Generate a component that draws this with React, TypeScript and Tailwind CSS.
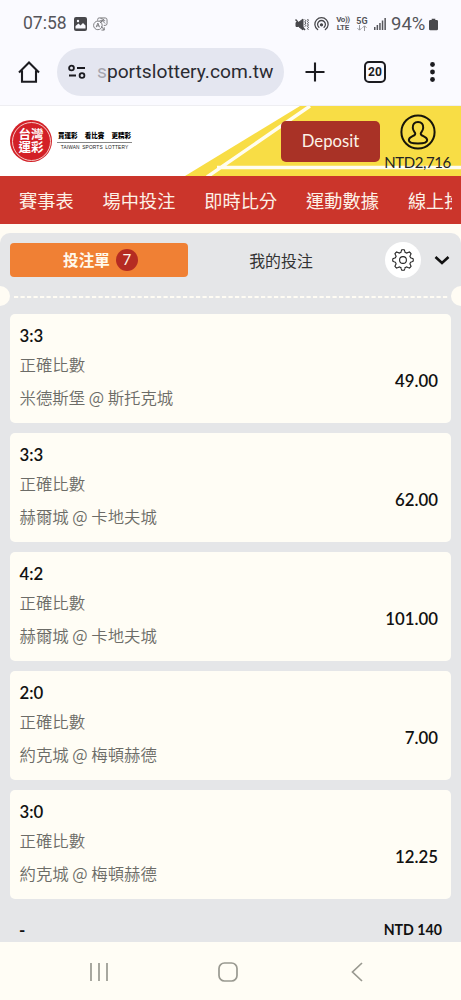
const latin = "font-[Lato,'Noto_Sans_CJK_TC',sans-serif]";

const menu = ["賽事表", "場中投注", "即時比分", "運動數據", "線上投注"];

const bets = [
  { pick: "3:3", market: "正確比數", match: "米德斯堡 @ 斯托克城", odds: "49.00" },
  { pick: "3:3", market: "正確比數", match: "赫爾城 @ 卡地夫城", odds: "62.00" },
  { pick: "4:2", market: "正確比數", match: "赫爾城 @ 卡地夫城", odds: "101.00" },
  { pick: "2:0", market: "正確比數", match: "約克城 @ 梅頓赫德", odds: "7.00" },
  { pick: "3:0", market: "正確比數", match: "約克城 @ 梅頓赫德", odds: "12.25" },
];

// Outline of the settings gear, eight rounded teeth
function gearPath() {
  const pts: string[] = [];
  const n = 160;
  for (let i = 0; i <= n; i++) {
    const a = (i / n) * Math.PI * 2;
    const wave = Math.max(-1, Math.min(1, Math.cos(a * 8) * 1.7));
    const r = 9.05 + wave * 1.2;
    pts.push(`${(12 + r * Math.sin(a)).toFixed(2)} ${(12 - r * Math.cos(a)).toFixed(2)}`);
  }
  return `M${pts.join("L")}Z`;
}

function StatusBar() {
  return (
    <div className="flex h-[47px] items-center pl-[23px] pr-[22px] pt-px text-[#55555a]">
      <span className="w-[44px] whitespace-nowrap font-[Roboto,sans-serif] text-[17.5px] leading-none">07:58</span>
      <svg className="ml-[7px] h-[14px] w-[13px]" viewBox="0 0 13 14">
        <rect width="13" height="14" rx="2" fill="#48484c" />
        <path d="M1.5 11.5V9l3-2.5 2 2 2.5-2.5 2.5 2.5v3z" fill="#fafaff" />
        <circle cx="4" cy="4" r="1.2" fill="#fafaff" />
      </svg>
      <svg className="ml-[6px] h-[14px] w-[15px]" viewBox="0 0 16 15" fill="none" stroke="#77777b">
        <path d="M5 4V2.5Q5 1 6.5 1H13q2 0 2 2v4q0 2-2 2h-1.5M8 1.5l3 1M7 4h6M9.5 4 8 6.5M10 4l3 3M12 2 8 6" />
        <circle cx="5.2" cy="9" r="4.6" />
        <path d="m3.3 11 1.9-4.5L7 11M4 9.5h2.5M9 10l3 4M12 11v3H9" />
      </svg>
      <div className="ml-auto flex items-center">
        <svg className="h-[13px] w-[14px]" viewBox="0 0 14 13" fill="none" stroke="#48484c">
          <path d="M1 4.5h2.5L8 1v11L3.5 8.5H1z" fill="#48484c" />
          <path d="M.5 1.5 10 12" strokeWidth="1.5" />
          <path d="m9.8 1.5 1 1.2-1 1.2 1 1.2-1 1.2 1 1.2-1 1.2M12.5 1l.9 1.2-.9 1.2.9 1.2-.9 1.2.9 1.2-.9 1.2.9 1.2-.9 1.2.9 1.2" />
        </svg>
        <svg className="ml-[5px] h-[14px] w-[15px]" viewBox="0 0 15 14" fill="none" stroke="#48484c" strokeWidth="1.3" strokeLinecap="round">
          <path d="M3.6 12.6a6.6 6.6 0 1 1 7.8 0M4.9 10.3a3.9 3.9 0 1 1 5.2 0" />
          <circle cx="7.5" cy="7.8" r="1" fill="#48484c" />
        </svg>
        <div className="ml-[7px] flex w-[14px] flex-col items-center whitespace-nowrap font-[Roboto,sans-serif] text-[8px] font-bold leading-[8px]">
          <span className="tracking-[-0.4px]">Vo))</span>
          <span className="tracking-[-0.2px]">LTE</span>
        </div>
        <div className="ml-[6px] flex w-[12px] flex-col items-center whitespace-nowrap font-[Roboto,sans-serif] text-[9px] font-bold leading-[8px]">
          <span>5G</span>
          <svg className="h-[6px] w-[10px]" viewBox="0 0 10 6" fill="none" stroke="#99999d">
            <path d="M2.5 0v5M.5 3.2l2 2 2-2M7.5 6V1M5.5 2.8l2-2 2 2" />
          </svg>
        </div>
        <svg className="ml-[6px] h-[12px] w-[12px]" viewBox="0 0 12 12" fill="#55555a">
          <path d="M0 9h1.5v3H0zM2.6 7h1.5v5H2.6zM5.2 5h1.5v7H5.2zM7.8 2.5h1.5V12H7.8zM10.4 0h1.5v12h-1.5z" />
        </svg>
        <span className="ml-[5px] w-[37px] whitespace-nowrap font-[Roboto,sans-serif] text-[18.5px] leading-none">94%</span>
        <svg className="ml-px mr-px h-[13px] w-[9px]" viewBox="0 0 10 13" fill="#48484c">
          <path d="M3 0h4v1.5h1.5Q10 1.5 10 3v8.5Q10 13 8.5 13h-7Q0 13 0 11.5V3q0-1.5 1.5-1.5H3z" />
        </svg>
      </div>
    </div>
  );
}

function BrowserBar() {
  return (
    <div className="flex h-[59px] items-start border-b border-[#eeeef2] pl-[18px] pt-px">
      <svg className="mt-[12px] h-[24px] w-[22px]" viewBox="0 0 22 24" fill="none" stroke="#1b1b20" strokeWidth="2.1">
        <path d="M1 12.5 11 2.5l10 10M4 10.5v11.3h14V10.5" />
      </svg>
      <div className="ml-[17px] flex h-[48px] w-[227px] items-center rounded-full bg-[#e4e6f0] pl-[11px]">
        <svg className="h-[16px] w-[18px]" viewBox="0 0 18 16" fill="none" stroke="#1b1b20" strokeWidth="1.8">
          <circle cx="3.5" cy="4" r="2.4" />
          <path d="M9 4h8M1 11.5h7" />
          <circle cx="14" cy="11.5" r="2.4" />
        </svg>
        <span className="ml-[11px] w-[178px] whitespace-nowrap font-[Roboto,sans-serif] text-[19.2px] leading-none text-[#2b2b32]">
          <span className="text-[#a6a7b0]">s</span>portslottery.com.tw
        </span>
      </div>
      <svg className="ml-[21px] mt-[14px] h-[20px] w-[20px]" viewBox="0 0 20 20" stroke="#1b1b20" strokeWidth="2.1">
        <path d="M10 .5v19M.5 10h19" />
      </svg>
      <div className="ml-[39px] mt-[13px] flex h-[22px] w-[22px] items-center justify-center rounded-[5px] border-2 border-[#1b1b20] font-[Roboto,sans-serif] text-[12px] font-bold text-[#1b1b20]">
        20
      </div>
      <svg className="ml-[44px] mt-[14px] h-[20px] w-[5px]" viewBox="0 0 5 20" fill="#1b1b20">
        <circle cx="2.5" cy="2.5" r="2.4" />
        <circle cx="2.5" cy="10" r="2.4" />
        <circle cx="2.5" cy="17.5" r="2.4" />
      </svg>
    </div>
  );
}

function Logo() {
  return (
    <div className="flex items-center">
      <div className="h-[42px] w-[42px] rounded-full bg-[#d32027] p-[1.5px]">
        <div className="flex h-full w-full items-center justify-center rounded-full border border-[#f5c9c5] pt-px">
          <div className="w-[26px] text-center text-[12.5px] font-bold leading-[12.5px] text-white">台灣運彩</div>
        </div>
      </div>
      <div className="ml-[5px] flex w-[75px] flex-col items-center whitespace-nowrap text-black">
        <div className="flex h-[11px] w-[73px] justify-between text-[6.5px] font-black leading-[9px]">
          <span>買運彩</span>
          <span>看比賽</span>
          <span>更精彩</span>
        </div>
        <div className="h-px w-full bg-[#888]" />
        <span className="mt-[1px] font-['Liberation_Sans',sans-serif] text-[4.8px] leading-[7px] tracking-[0.15px] text-[#222] [word-spacing:1px]">
          TAIWAN SPORTS LOTTERY
        </span>
      </div>
    </div>
  );
}

function SiteHeader() {
  return (
    <header className="relative flex h-[70px] bg-white pl-[9px]">
      <svg className="absolute inset-0 h-full w-full" viewBox="0 0 461 70">
        <path d="M300 0H461V70H185z" fill="#f8dd45" />
        <path d="M310 0 207 71M461 61.5H217" stroke="#fffdf0" strokeWidth="3.4" />
      </svg>
      <div className="relative flex w-full items-start">
        <div className="pl-px pt-[14px]">
          <Logo />
        </div>
        <button className="ml-auto mt-[15px] h-[41px] w-[99px] rounded-[5px] bg-[#a93226] text-[16.7px] text-[#fdf3e8]">
          Deposit
        </button>
        <div className="ml-[3px] flex w-[69px] flex-col items-center pt-[8px]">
          <Account />
          <span className="mt-[3px] whitespace-nowrap text-[15px] leading-[18px] tracking-[-0.4px] text-[#222]">NTD2,716</span>
        </div>
        <div className="w-[9px]" />
      </div>
    </header>
  );
}

function Account() {
  return (
    <svg className="h-[36px] w-[36px]" viewBox="0 0 36 36" fill="none" stroke="#17150a" strokeWidth="2">
      <circle cx="18" cy="18" r="16.6" />
      <path d="M18 8c-3.6 0-5.500 2.500-5.200 6 .2 2.500 1.500 3.700 2.200 4.800.6 1 .1 2-1.200 2.700-2.600 1.200-5 2-5 4.500 0 2.200 4 3.500 9.200 3.500s9.200-1.300 9.200-3.500c0-2.500-2.400-3.300-5-4.500-1.300-.7-1.800-1.700-1.200-2.700.7-1.100 2-2.300 2.200-4.800.3-3.500-1.600-6-5.200-6z" />
    </svg>
  );
}

function TabRow() {
  return (
    <div className="flex h-[53px] items-center pl-[10px] pr-[11px]">
      <button className="flex h-[34px] w-[178px] items-center justify-center gap-[6px] rounded-[4px] bg-[#f08034] pl-[3px] text-[15.6px] font-bold text-[#fff9ec]">
        <span className="pt-[2px]">投注單</span>
        <span className="flex h-[22px] w-[22px] items-center justify-center rounded-full bg-[#b52b22] text-[15px] font-normal">7</span>
      </button>
      <button className="w-[186px] pt-[2px] text-center text-[15.9px] text-[#333]">我的投注</button>
      <div className="ml-[11px] flex h-[36px] w-[36px] items-center justify-center rounded-full bg-white">
        <svg className="h-[24px] w-[24px]" viewBox="0 0 24 24" fill="none" stroke="#222" strokeWidth="1.1">
          <path d={gearPath()} />
          <circle cx="12" cy="12" r="3.4" />
        </svg>
      </div>
      <svg className="ml-auto mt-[2px] h-[9px] w-[16px]" viewBox="0 0 16 9" fill="none" stroke="#111" strokeWidth="2.6">
        <path d="m1.5 1 6.5 6 6.5-6" />
      </svg>
    </div>
  );
}

function Perforation() {
  return (
    <div className="flex h-[20px] items-center justify-between overflow-hidden">
      <div className="-ml-[10px] h-[20px] w-[20px] shrink-0 rounded-full bg-[#fffcf4]" />
      <svg className="mt-[2px] h-[2px] w-[440px]" viewBox="0 0 440 2">
        <path d="M3 1h435" stroke="#fffcf4" strokeWidth="2" strokeDasharray="4.2 2.3" />
      </svg>
      <div className="-mr-[10px] h-[20px] w-[20px] shrink-0 rounded-full bg-[#fffcf4]" />
    </div>
  );
}

function BetCard({ pick, market, match, odds }: (typeof bets)[number]) {
  return (
    <div className="flex h-[109px] justify-between rounded-[5px] bg-[#fffdf5] pl-[9.5px] pr-[13px]">
      <div className="pt-[10px]">
        <div className="text-[16.8px] font-semibold leading-[24px] text-[#111]">{pick}</div>
        <div className="mt-px font-['Noto_Sans_CJK_TC',sans-serif] text-[16.4px] font-[350] leading-[30px] text-[#6c6c67]">{market}</div>
        <div className="mt-[3px] font-['Noto_Sans_CJK_TC',sans-serif] text-[16.4px] font-[350] leading-[30px] text-[#6c6c67]">{match}</div>
      </div>
      <div className="pt-[55px] text-[16.8px] font-semibold leading-[24px] text-[#111]">{odds}</div>
    </div>
  );
}

function SystemNav() {
  return (
    <nav className="flex h-[58px] items-center bg-[#fffdf5] pl-[90px] pt-px">
      <svg className="h-[20px] w-[18px]" viewBox="0 0 18 20" stroke="#999990" strokeWidth="1.7">
        <path d="M1 1v18M9 1v18M17 1v18" />
      </svg>
      <svg className="ml-[110px] h-[20px] w-[20px]" viewBox="0 0 20 20" fill="none" stroke="#999990" strokeWidth="1.7">
        <rect x="1" y="1" width="18" height="18" rx="5.5" />
      </svg>
      <svg className="ml-[113px] h-[20px] w-[12px]" viewBox="0 0 12 20" fill="none" stroke="#999990" strokeWidth="1.7">
        <path d="M11 1 1.5 10l9.5 9" />
      </svg>
    </nav>
  );
}

export default function App() {
  return (
    <div lang="zh-TW" className={`h-[1000px] w-[461px] overflow-hidden bg-[#fffcf4] ${latin}`}>
      <div className="bg-[#fafaff]">
        <StatusBar />
        <BrowserBar />
      </div>
      <SiteHeader />
      <nav className="mb-[9px] flex h-[48px] items-center overflow-hidden bg-[#cb352b] pl-[19px] pr-[9px] pt-[4px]">
        <div className="flex gap-[29px] overflow-hidden whitespace-nowrap text-[18.2px] text-[#fdf1e7]">
          {menu.map((item) => (
            <span key={item}>{item}</span>
          ))}
        </div>
      </nav>
      <main className="h-[709px] rounded-t-[10px] bg-[#e5e6e8]">
        <TabRow />
        <Perforation />
        <div className="flex flex-col gap-[10px] px-[10px] pt-[8px]">
          {bets.map((bet, i) => (
            <BetCard key={i} {...bet} />
          ))}
        </div>
        <div className="flex items-center justify-between pl-[19px] pr-[19px] pt-[19px] text-[14.2px] font-bold leading-[24px] text-[#111]">
          <span className="text-[17px]">-</span>
          <span>NTD 140</span>
        </div>
      </main>
      <SystemNav />
    </div>
  );
}
